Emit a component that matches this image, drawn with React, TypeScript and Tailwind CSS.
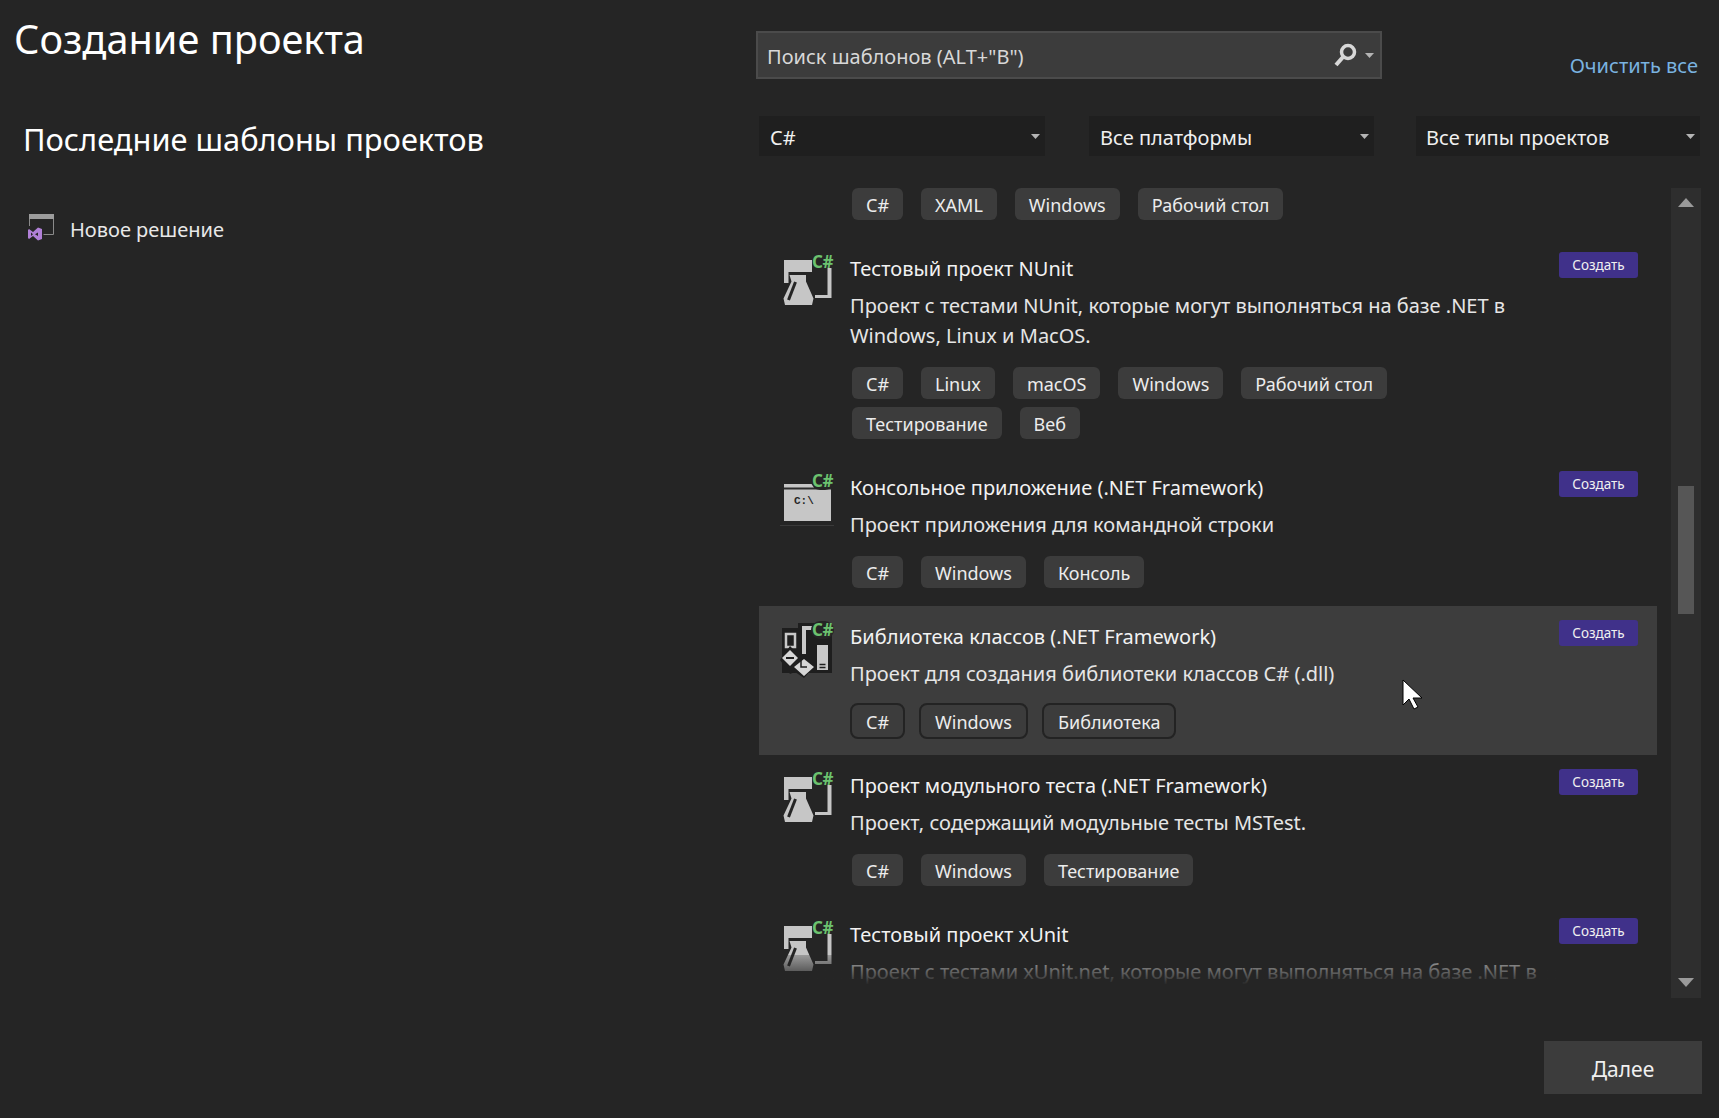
import React from "react";

type Template = {
  id: string;
  title: string;
  lines: string[];
  tags: string[][];
  icon: "flask" | "console" | "library";
  hovered?: boolean;
};

const templates: Template[] = [
  {
    id: "nunit",
    title: "Тестовый проект NUnit",
    lines: [
      "Проект с тестами NUnit, которые могут выполняться на базе .NET в",
      "Windows, Linux и MacOS.",
    ],
    tags: [
      ["C#", "Linux", "macOS", "Windows", "Рабочий стол"],
      ["Тестирование", "Веб"],
    ],
    icon: "flask",
  },
  {
    id: "console",
    title: "Консольное приложение (.NET Framework)",
    lines: ["Проект приложения для командной строки"],
    tags: [["C#", "Windows", "Консоль"]],
    icon: "console",
  },
  {
    id: "library",
    title: "Библиотека классов (.NET Framework)",
    lines: ["Проект для создания библиотеки классов C# (.dll)"],
    tags: [["C#", "Windows", "Библиотека"]],
    icon: "library",
    hovered: true,
  },
  {
    id: "mstest",
    title: "Проект модульного теста (.NET Framework)",
    lines: ["Проект, содержащий модульные тесты MSTest."],
    tags: [["C#", "Windows", "Тестирование"]],
    icon: "flask",
  },
  {
    id: "xunit",
    title: "Тестовый проект xUnit",
    lines: ["Проект с тестами xUnit.net, которые могут выполняться на базе .NET в"],
    tags: [],
    icon: "flask",
  },
];

function Caret({ className }: { className: string }) {
  return (
    <svg width="9" height="5" viewBox="0 0 9 5" className={className}>
      <path d="M0 0h9L4.5 5z" fill="#b4b4b4" />
    </svg>
  );
}

function FlaskIcon() {
  return (
    <svg width="54" height="54" viewBox="0 0 54 54">
      <path d="M4 6h28v12H8.500v11H4z" fill="#c6c6c6" />
      <path d="M47.500 14h4v30H35v-3h12.500z" fill="#c6c6c6" />
      <path
        d="M9.500 21H26v6.500L33.500 44.500 32 51H5L3.500 44.500 11.500 27.500z"
        fill="#c6c6c6"
      />
      <path d="M15.500 28L8.500 46" stroke="#252525" strokeWidth="3" />
    </svg>
  );
}

function ConsoleIcon() {
  return (
    <svg width="54" height="54" viewBox="0 0 54 54">
      <path d="M0 52.500H55" stroke="#3a3a3a" strokeWidth="1" />
      <rect x="4" y="11" width="47" height="37" fill="#c6c6c6" />
      <path d="M4 15.500H51" stroke="#2c2c2c" strokeWidth="2" />
    </svg>
  );
}

function LibraryIcon() {
  return (
    <svg width="54" height="56" viewBox="0 0 54 56">
      <rect x="2" y="6" width="16" height="45" fill="#1e1e1e" />
      <rect x="18" y="1" width="17" height="50" fill="#1e1e1e" />
      <rect x="35" y="8" width="17" height="43" fill="#1e1e1e" />
      <path d="M6 12h9v13H6z" fill="none" stroke="#c8c8c8" strokeWidth="2.500" />
      <path d="M22 4h11v4h-7v24h-4z" fill="#c8c8c8" />
      <path d="M37 23h11v25H37z" fill="#c8c8c8" />
      <path d="M39.500 42.500h6M39.500 45.500h6" stroke="#1e1e1e" strokeWidth="1.500" />
      <path d="M10 24l12 12 12 9-10 11-9-6-5 2-10-14z" fill="#1e1e1e" />
      <path d="M10 28l8 8-8 8-8-8zM24 37l10 8-10 9-10-9z" fill="#d6d6d6" />
      <path d="M21 38v7h6" fill="none" stroke="#1e1e1e" strokeWidth="1.500" />
      <path d="M6 36h8" stroke="#1e1e1e" strokeWidth="2" />
    </svg>
  );
}

function SolutionIcon() {
  return (
    <svg width="28" height="28" viewBox="0 0 28 28" className="mb-[6px]">
      <path d="M1.500 1.500h24v20h-10" fill="none" stroke="#8a8a8a" strokeWidth="1" />
      <path d="M1 1h25v5H1z" fill="#9c9c9c" />
      <path d="M1.500 6v7" stroke="#8a8a8a" strokeWidth="1" />
      <path
        d="M1 16l4 3 5-4.500 4 1.500v10l-4 1.500-5-4.500-4 3-1-1v-8zm2 3.500v3.500l2-1.700zm7 0l-3 1.800 3 1.800z"
        fill="#b180d7"
        fillRule="evenodd"
      />
    </svg>
  );
}

function TemplateIcon({ kind }: { kind: Template["icon"] }) {
  return (
    <div className="relative mt-[16px] ml-[21px] h-[54px] w-[54px]">
      {kind === "flask" && <FlaskIcon />}
      {kind === "console" && <ConsoleIcon />}
      {kind === "library" && <LibraryIcon />}
      {kind === "console" && (
        <span className="absolute top-[22px] left-[14px] text-[11px] leading-[12px] font-bold text-[#252525] [font-family:'Liberation_Mono',monospace]">
          C:\
        </span>
      )}
      {/* C# badge */}
      <span
        className={`absolute right-[0px] top-[-1px] rounded-full px-[1px] text-[17px] leading-[18px] font-bold tracking-[-0.5px] text-[#6cc26f] ${
          kind === "flask" ? "" : "bg-[#252525]"
        } ${kind === "library" ? "bg-[#1e1e1e]" : ""}`}
      >
        C#
      </span>
    </div>
  );
}

function Tag({ label, hovered }: { label: string; hovered?: boolean }) {
  return (
    <span
      className={`flex h-[32px] items-center rounded-[6px] bg-[#3c3c3c] px-[14px] pt-[2px] text-[18px] text-[#ececec] ${
        hovered ? "outline-2 outline-[#232323]" : ""
      }`}
    >
      {label}
    </span>
  );
}

function TagRows({ rows, hovered }: { rows: string[][]; hovered?: boolean }) {
  return (
    <div className="ml-[2px] flex flex-col gap-[8px]">
      {rows.map((row, i) => (
        <div className="flex gap-[18px]" key={i}>
          {row.map((tag) => (
            <Tag label={tag} hovered={hovered} key={tag} />
          ))}
        </div>
      ))}
    </div>
  );
}

function TemplateRow({ item }: { item: Template }) {
  return (
    <div
      className={`relative flex pb-[18px] ${item.hovered ? "bg-[#3d3d3d]" : ""}`}
    >
      <div className="w-[91px] shrink-0">
        <TemplateIcon kind={item.icon} />
      </div>
      <div className="flex-1 pt-[14px]">
        <div className="h-[34px] text-[20px] leading-[34px] text-[#f2f2f2]">
          {item.title}
        </div>
        <div className="mt-[5px] mb-[16px] text-[20px] leading-[30px] text-[#e6e6e6]">
          {item.lines.map((line) => (
            <div key={line}>{line}</div>
          ))}
        </div>
        {item.tags.length > 0 && (
          <TagRows rows={item.tags} hovered={item.hovered} />
        )}
      </div>
      <button className="mt-[14px] mr-[19px] h-[26px] w-[79px] shrink-0 rounded-[3px] bg-[#40318a] pt-[1px] text-[13.5px] text-[#f0f0f0]">
        Создать
      </button>
      {item.hovered && (
        <svg
          width="22"
          height="32"
          viewBox="0 0 22 32"
          className="absolute top-[73px] left-[643px]"
        >
          <path
            d="M1 1v25l6-6 5 10 4-2-5-9h9z"
            fill="#ffffff"
            stroke="#000000"
            strokeWidth="1"
          />
        </svg>
      )}
    </div>
  );
}

function Filter({ label, left }: { label: string; left: string }) {
  return (
    <div
      className={`flex h-[40px] items-center justify-between bg-[#1f1f1f] text-[20px] text-[#f0f0f0] ${left}`}
    >
      <span className="pt-[3px]">{label}</span>
      <Caret className="mr-[5px]" />
    </div>
  );
}

export default function App() {
  return (
    <div
      className="flex h-[1118px] w-full overflow-hidden bg-[#252525]"
      style={{ fontFamily: '"Noto Sans", "Open Sans", sans-serif' }}
    >
      <aside className="w-[756px] shrink-0">
        <h1 className="mt-[13px] ml-[14px] text-[39.7px] leading-[52px] font-normal text-white">
          Создание проекта
        </h1>
        <h2 className="mt-[53px] ml-[23px] text-[30.8px] leading-[42px] font-normal text-white">
          Последние шаблоны проектов
        </h2>
        <div className="mt-[53px] ml-[28px] flex items-center gap-[14px]">
          <SolutionIcon />
          <span className="text-[20px] text-[#e8e8e8]">Новое решение</span>
        </div>
      </aside>

      <main className="flex min-w-0 flex-1 flex-col pt-[31px]">
        <div className="flex h-[48px]">
          <div className="flex h-[48px] w-[626px] items-center border-2 border-[#4b4b4b] bg-[#3c3c3c] pl-[9px] text-[20px] text-[#d8d8d8]">
            <span className="flex-1 pt-[3px]">Поиск шаблонов (ALT+"B")</span>
            <svg width="24" height="24" viewBox="0 0 24 24" className="mr-[8px]">
              <circle cx="15" cy="9" r="6.500" fill="none" stroke="#d8d8d8" strokeWidth="3.500" />
              <path d="M10 14L3 22" stroke="#d8d8d8" strokeWidth="4" />
            </svg>
            <Caret className="mr-[6px]" />
          </div>
          <a className="mt-[20px] ml-auto mr-[21px] h-[30px] text-[20px] leading-[30px] text-[#7ab3e0]">
            Очистить все
          </a>
        </div>

        <div className="mt-[37px] ml-[3px] flex">
          <Filter label="C#" left="w-[286px] pl-[11px]" />
          <Filter label="Все платформы" left="ml-[44px] w-[285px] pl-[11px]" />
          <Filter label="Все типы проектов" left="ml-[42px] w-[284px] pl-[10px]" />
        </div>

        <div className="mt-[32px] ml-[3px] flex h-[810px]">
          <div className="relative h-[797px] w-[898px] shrink-0 overflow-hidden">
            <div className="pb-[18px] pl-[91px]">
              <TagRows rows={[["C#", "XAML", "Windows", "Рабочий стол"]]} />
            </div>
            {templates.map((item) => (
              <TemplateRow item={item} key={item.id} />
            ))}
            {/* fade on the bottom edge of the list */}
            <div className="absolute right-[100px] bottom-0 left-0 h-[30px] bg-gradient-to-b from-[#25252544] to-[#252525]" />
          </div>

          <div className="ml-[14px] flex w-[30px] flex-col items-center bg-[#2e2e2e]">
            <svg width="16" height="9" viewBox="0 0 16 9" className="mt-[10px]">
              <path d="M8 0l8 9H0z" fill="#9a9a9a" />
            </svg>
            <div className="mt-[279px] h-[128px] w-[16px] bg-[#565656]" />
            <svg width="16" height="9" viewBox="0 0 16 9" className="mt-auto mb-[11px]">
              <path d="M0 0h16L8 9z" fill="#9a9a9a" />
            </svg>
          </div>
        </div>

        <div className="mt-[43px] flex justify-end pr-[17px]">
          <button className="h-[53px] w-[158px] bg-[#3c3c3c] pt-[5px] text-[21px] text-[#f0f0f0]">
            Далее
          </button>
        </div>
      </main>
    </div>
  );
}
